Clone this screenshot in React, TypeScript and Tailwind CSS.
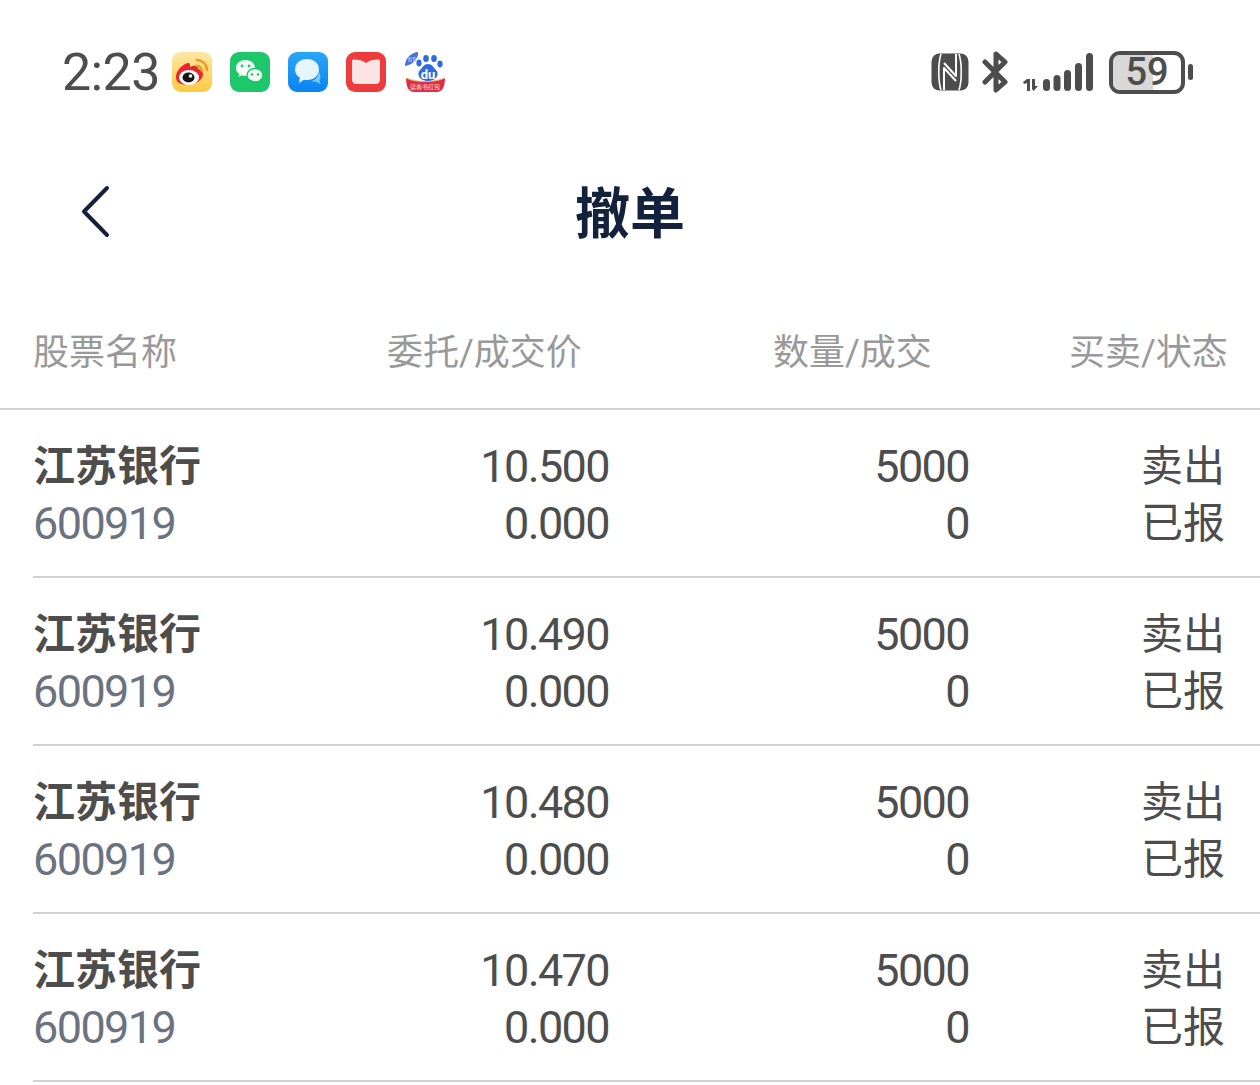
const cjk = "font-['Roboto','Noto_Sans_CJK_SC',sans-serif]";
const digits = 'text-[45px] tracking-[-1.6px]';

const orders = ['10.500', '10.490', '10.480', '10.470'];

function Weibo() {
  return (
    <svg width="40" height="40" viewBox="0 0 40 40">
      <defs>
        <linearGradient id="wb" x1="0" y1="0" x2="0" y2="1">
          <stop offset="0" stopColor="#fde6a6" />
          <stop offset="1" stopColor="#fdc93f" />
        </linearGradient>
      </defs>
      <rect width="40" height="40" rx="9" fill="url(#wb)" />
      <path d="M4 25c0-5 4-10 9-13 4-2 6-.5 5 3 4-2 9-2 8 2 3 .5 5 2.500 5 5.500 0 5-7 10-15 10S4 31 4 25z" fill="#e8262f" />
      <ellipse cx="17" cy="25.500" rx="10" ry="7.500" fill="#fff" />
      <ellipse cx="16.500" cy="25.500" rx="6" ry="5" fill="#161616" />
      <circle cx="18.500" cy="24" r="1.800" fill="#fff" />
      <path d="M25 14c2.500.3 4.500 2 5 5M25 8c5.500.3 9.500 4 10 10" fill="none" stroke="#ec9a24" strokeWidth="2.600" strokeLinecap="round" />
    </svg>
  );
}

function WeChat() {
  return (
    <svg width="40" height="40" viewBox="0 0 40 40">
      <rect width="40" height="40" rx="9" fill="#1ec769" />
      <path d="M15.500 8C10 8 6 11.500 6 16c0 2.500 1.300 4.500 3.300 6l-.8 3 3.400-1.700c1.200.4 2.400.6 3.600.6 5.500 0 9.500-3.700 9.500-8S21 8 15.500 8z" fill="#f2fbf6" />
      <path d="M25 16.500c-4.500 0-8 3-8 6.700s3.500 6.700 8 6.700c1 0 2-.2 2.900-.5l2.700 1.500-.7-2.500c1.900-1.200 3.100-3.100 3.100-5.200 0-3.700-3.500-6.700-8-6.700z" fill="#f2fbf6" stroke="#1ec769" strokeWidth="1.500" />
      <circle cx="12" cy="14" r="1.400" fill="#1ec769" />
      <circle cx="19" cy="14" r="1.400" fill="#1ec769" />
      <circle cx="22" cy="22.500" r="1.300" fill="#1ec769" />
      <circle cx="28" cy="22.500" r="1.300" fill="#1ec769" />
    </svg>
  );
}

function Message() {
  return (
    <svg width="40" height="40" viewBox="0 0 40 40">
      <defs>
        <linearGradient id="ms" x1="0" y1="0" x2="0" y2="1">
          <stop offset="0" stopColor="#2aa6f8" />
          <stop offset="1" stopColor="#0a84f0" />
        </linearGradient>
      </defs>
      <rect width="40" height="40" rx="9" fill="url(#ms)" />
      <path d="M19 7c7 0 12 4.500 12 10.500S26 28 19 28c-1 0-2 0-3-.3L11 31l.8-5.300C8.700 23.800 7 21 7 17.500 7 11.500 12 7 19 7z" fill="#e6f4fe" />
      <path d="M31 20c1.500 2 2 6 .5 8l1 4-5-2.500c-1.500.3-3 0-4-.5 4-1 7-4.500 7.500-9z" fill="#7cc7fb" />
    </svg>
  );
}

function Book() {
  return (
    <svg width="40" height="40" viewBox="0 0 40 40">
      <rect width="40" height="40" rx="9" fill="#ee3c3c" />
      <path d="M6 9c0-1 1-1.500 2-1.500 5 0 9 1 12 3.500 3-2.500 7-3.500 12-3.500 1 0 2 .5 2 1.500V27c0 4-2 5-5 5H11c-3 0-5-1-5-5z" fill="#fde4e4" />
    </svg>
  );
}

function Baidu() {
  return (
    <svg width="42" height="42" viewBox="0 0 42 42">
      <path d="M1 15C1 8 6 2 14 1c1 6-5 13-13 14z" fill="#4a6fd8" />
      <text x="4" y="10" fontSize="4.500" fill="#fff" fontFamily="'Noto Sans CJK SC', sans-serif">红包</text>
      <ellipse cx="15" cy="12" rx="2.600" ry="3.400" fill="#2f6be0" />
      <ellipse cx="22" cy="7.500" rx="2.800" ry="3.600" fill="#2f6be0" />
      <ellipse cx="30" cy="7.500" rx="2.800" ry="3.600" fill="#2f6be0" />
      <ellipse cx="36" cy="13" rx="2.600" ry="3.400" fill="#2f6be0" />
      <path d="M24 13c4 0 5 3 7.500 5.500 2.500 2.500 2.500 5 1.500 7-1.500 3-5.500 4.500-9 4.500s-7.500-1.500-9-4.500c-1-2-1-4.500 1.500-7C19 16 20 13 24 13z" fill="#2f6be0" />
      <text x="24" y="27.500" textAnchor="middle" fontSize="13" fontWeight="700" fill="#fff" fontFamily="Roboto, sans-serif">du</text>
      <path d="M2 27c5 2.500 12 3.500 19 3.500s15-1 20-3.500c0 9-3 14-8 14H10C5 41 2 36 2 27z" fill="#e22b4e" />
      <path d="M2 27c5 2.500 12 3.500 19 3.500s15-1 20-3.500" fill="none" stroke="#e8b84a" strokeWidth="1" />
      <text x="21" y="38" textAnchor="middle" fontSize="6" fill="#fde7b0" fontFamily="'Noto Sans CJK SC', sans-serif">读春书红包</text>
    </svg>
  );
}

function Nfc() {
  return (
    <svg width="38" height="38" viewBox="0 0 38 38">
      <rect x="0.500" y="0.500" width="37" height="37" rx="8" fill="#4d4d4d" />
      <path d="M10 1C7 10 7 28 10 37M28 1c3 9 3 27 0 36" fill="none" stroke="#fff" strokeWidth="1.600" />
      <path d="M13 37V15l12 13M25 1v22L13 10" fill="none" stroke="#fff" strokeWidth="2" strokeLinejoin="round" />
    </svg>
  );
}

function Bluetooth() {
  return (
    <svg width="28" height="42" viewBox="0 0 28 42">
      <path d="M3 11l20 20-9 8V3l9 8L3 31" fill="none" stroke="#4d4d4d" strokeWidth="5" strokeLinejoin="round" strokeLinecap="round" />
    </svg>
  );
}

function Signal() {
  return (
    <svg width="72" height="40" viewBox="0 0 72 40">
      <path d="M0 30l4-3h3v12H4V31l-3 1z" fill="#4d4d4d" />
      <path d="M9 27h3v7h3l-4.500 5L9 37z" fill="#4d4d4d" />
      <rect x="20" y="27" width="7" height="12" rx="3.500" fill="#4d4d4d" />
      <rect x="30.500" y="23" width="7" height="16" rx="3.500" fill="#4d4d4d" />
      <rect x="41" y="18" width="7" height="21" rx="3.500" fill="#4d4d4d" />
      <rect x="52" y="11" width="7" height="28" rx="3.500" fill="#4d4d4d" />
      <rect x="63" y="1" width="7" height="38" rx="3.500" fill="#4d4d4d" />
    </svg>
  );
}

function Battery() {
  return (
    <div className="flex items-center gap-[3px]">
      <div className="relative flex h-[43px] w-[76px] items-center justify-center rounded-[11px] border-[4px] border-[#4d4d4d]">
        <div className="absolute inset-y-0 left-0 w-[40px] rounded-l-[7px] bg-[#d8d8d8]" />
        <span className="relative font-['Roboto',sans-serif] text-[38px] leading-[35px] font-medium text-[#4d4d4d]">59</span>
      </div>
      <div className="h-[16px] w-[5px] rounded-full bg-[#4d4d4d]" />
    </div>
  );
}

function StatusBar() {
  return (
    <div className="flex h-[146px] items-center justify-between pb-[2px] pl-[62px] pr-[67px]">
      <div className="flex items-center">
        <span className="mr-[12px] mt-[2px] font-['Roboto',sans-serif] text-[52px] leading-none tracking-[-0.6px] text-[#4d4d4d]">2:23</span>
        <div className="flex items-center gap-[18px]">
          <Weibo />
          <WeChat />
          <Message />
          <Book />
          <Baidu />
        </div>
      </div>
      <div className="flex items-center">
        <Nfc />
        <div className="ml-[13px] mr-[13px]"><Bluetooth /></div>
        <Signal />
        <div className="ml-[14px]"><Battery /></div>
      </div>
    </div>
  );
}

function App() {
  return (
    <div className={`h-[1085px] w-[1260px] overflow-hidden bg-white ${cjk}`}>
      <StatusBar />
      <div className="relative flex h-[132px] items-center justify-center pt-[4px]">
        <svg className="absolute left-[78px] top-[38px]" width="34" height="54" viewBox="0 0 34 54">
          <path d="M29 4L6 27.500 29 51" fill="none" stroke="#14213d" strokeWidth="4" strokeLinecap="round" strokeLinejoin="round" />
        </svg>
        <h1 className="text-[55px] leading-none font-bold text-[#14213d]">撤单</h1>
      </div>
      <div className="grid h-[132px] grid-cols-[354px_386px_296px_1fr] items-center border-b-2 border-[#d2d2d2] pl-[33px] pt-[20px] text-[36px] text-[#999999]">
        <span>股票名称</span>
        <span>委托/成交价</span>
        <span>数量/成交</span>
        <span>买卖/状态</span>
      </div>
      {orders.map((price) => (
        <div key={price} className="ml-[33px] grid h-[168px] grid-cols-[166px_410px_360px_256px] content-center items-center gap-y-[15px] border-b-2 border-[#d2d2d2] pt-[4px] text-[42px] leading-[42px] text-[#4d4d4d]">
          <span className="whitespace-nowrap font-bold">江苏银行</span>
          <span className={`text-right ${digits}`}>{price}</span>
          <span className={`text-right ${digits}`}>5000</span>
          <span className="text-right">卖出</span>
          <span className={`text-[#6b7280] ${digits}`}>600919</span>
          <span className={`text-right ${digits}`}>0.000</span>
          <span className={`text-right ${digits}`}>0</span>
          <span className="text-right">已报</span>
        </div>
      ))}
    </div>
  );
}

export default App;
